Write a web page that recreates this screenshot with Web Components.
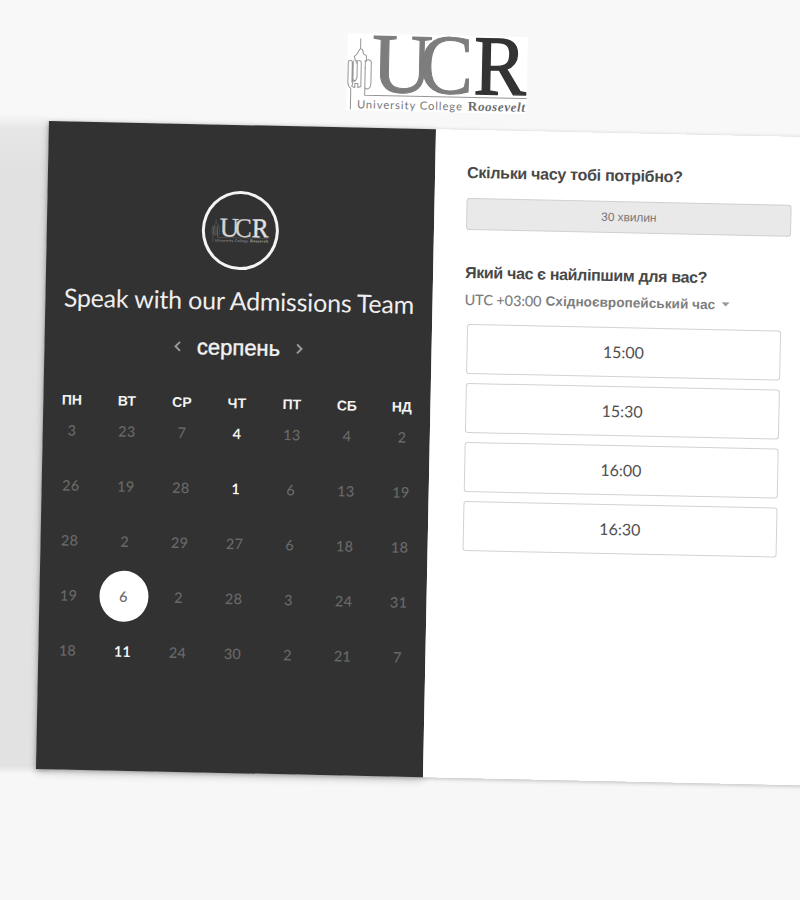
<!DOCTYPE html>
<html lang="uk"><head><meta charset="utf-8"><title>UCR</title>
<style>
html,body{margin:0;height:900px;overflow:hidden}
body{width:800px;background:linear-gradient(#f8f8f8,#f9f9f9 105px,#f8f8f8 112px,#f7f7f7);font-family:"Liberation Sans",Arial,sans-serif}
</style></head><body><booking-page></booking-page>
<script>
const define=(name,html)=>customElements.define(name,class extends HTMLElement{
  constructor(){super();this.attachShadow({mode:'open'});}
  connectedCallback(){const t=document.createElement('template');t.innerHTML=typeof html==='function'?html(this):html;this.shadowRoot.replaceChildren(t.content.cloneNode(true));}
});

define('ucr-logo',`<style>:host{display:block;width:180px;height:77px;background:var(--logo-bg,#fff)}svg{display:block;width:100%;height:100%;overflow:visible}</style>
<svg viewBox="0 0 180 77" font-family="'Liberation Serif',serif">
<g fill="none" stroke="var(--logo-line,#969696)" stroke-width="1">
<path d="M13 5v10l-1 1-2 4-3 3 1 4h1v3M13 15l2 1 1 4 3 2v5h-1v8"/>
<path d="M4 55v21M4 55q-3-2-3-6V29q0-2 2-2t2 2v20M6 27v22l-1 4 3 1V50h3v4l3-1V29q0-2-2-2t-2 2v15l-2 4-2-2M19 28q0-2 2-2t3 2v22q0 4-3 5t-3-3V34M18 35v26.500H180"/></g>
<g font-size="85" stroke-width="1">
<text x="24.500" y="58" fill="var(--logo-soft,#7d7d7d)" stroke="var(--logo-soft,#7d7d7d)" textLength="61" lengthAdjust="spacingAndGlyphs">U</text>
<text x="72" y="58" fill="var(--logo-soft,#7d7d7d)" stroke="var(--logo-soft,#7d7d7d)" textLength="54" lengthAdjust="spacingAndGlyphs">C</text>
<text x="126.500" y="58" fill="var(--logo-strong,#333)" stroke="var(--logo-strong,#333)" stroke-width="1.400" textLength="52.500" lengthAdjust="spacingAndGlyphs">R</text></g>
<text x="10.500" y="74.700" fill="var(--logo-text,#777)" font-family="Lato,sans-serif" font-size="11.200" textLength="105">University College</text>
<text x="121.500" y="74.700" fill="var(--logo-text,#6c6c6c)" font-weight="bold" font-size="13" textLength="57">R<tspan font-style="italic">oosevelt</tspan></text>
</svg>`);

define('org-avatar',`<style>:host{display:flex;align-items:center;justify-content:center;width:77px;height:79px;box-sizing:border-box;border:3px solid #f4f4f4;border-radius:50%}
ucr-logo{width:57px;height:25px;--logo-bg:transparent;--logo-line:#888;--logo-soft:#d2d2d2;--logo-strong:#e0e0e0;--logo-text:#aaa}</style><ucr-logo></ucr-logo>`);

define('month-nav',`<style>:host{display:flex;align-items:center;justify-content:center;gap:15.500px;color:#f2f2f2;font-size:22px;line-height:28px;-webkit-text-stroke:.4px;transform:translateX(.5px)}
svg{width:7px;height:11px;fill:none;stroke:#999;stroke-width:2}</style>
<svg viewBox="0 0 7 11"><path d="M6 1 1.500 5.500 6 10"/></svg><slot></slot><svg viewBox="0 0 7 11"><path d="M1 1 5.500 5.500 1 10"/></svg>`);

define('calendar-day',`<style>:host{display:flex;align-items:center;justify-content:center;height:55px;font:500 14.500px Lato,sans-serif;letter-spacing:.3px;color:#696969}
span{display:flex;align-items:center;justify-content:center;width:49px;height:51px;border-radius:50%}
:host([open]){color:#fff;font-weight:600}
:host([selected]) span{background:#fff;color:#666}</style><span><slot></slot></span>`);

const rows=['3 23 7 4* 13 4 2','26 19 28 1* 6 13 19','28 2 29 27 6 18 18','19 6! 2 28 3 24 31','18 11* 24 30 2 21 7'];
define('calendar-grid',()=>`<style>:host{display:grid;grid-template-columns:repeat(7,55px);grid-template-rows:20px;justify-content:center;grid-auto-rows:54.900px}
b{font-size:14px;line-height:20px;text-align:center;color:#f2f2f2}
calendar-day{margin:-6.200px -.6px 0 .6px}</style>`+
['ПН','ВТ','СР','ЧТ','ПТ','СБ','НД'].map(d=>`<b>${d}</b>`).join('')+
rows.join(' ').split(' ').map(d=>`<calendar-day ${d.endsWith('*')?'open':d.endsWith('!')?'selected':''}>${parseInt(d)}</calendar-day>`).join(''));

define('calendar-panel',`<style>:host{display:flex;flex-direction:column;width:387px;height:648px;box-sizing:border-box;padding-top:66px;background:#323232;box-shadow:0 3px 9px rgba(0,0,0,.2);flex:none}
org-avatar{align-self:center}
h1{margin:14.500px 0 0;font:400 25px/32px Lato,sans-serif;text-align:center;color:#eee;white-space:nowrap;letter-spacing:-.2px}
month-nav{margin-top:17.500px}calendar-grid{margin-top:31px}</style>
<org-avatar></org-avatar><h1>Speak with our Admissions Team</h1><month-nav>серпень</month-nav><calendar-grid></calendar-grid>`);

define('time-slot',`<style>:host{display:flex;align-items:center;justify-content:center;box-sizing:border-box;width:313.500px;height:50px;border:1px solid #d2d2d2;border-radius:3px;font:400 16px Lato,sans-serif;color:#505050;padding-bottom:1px}</style><slot></slot>`);

define('duration-option',`<style>:host{display:flex;align-items:center;justify-content:center;box-sizing:border-box;width:325px;height:32px;border:1px solid #d0d0d0;border-radius:3px;background:#e9e9e9;font-size:12px;letter-spacing:-.1px;color:#777}</style><slot></slot>`);

define('zone-picker',`<style>:host{display:flex;align-items:center;height:20px;color:#7d7d7d;white-space:nowrap}
.o{font:500 14.500px Lato,sans-serif;letter-spacing:-.1px;width:81px}.z{font-weight:700;font-size:13.500px;letter-spacing:.08px}i{margin-left:6px;border:4px solid transparent;border-top:4.500px solid #999;border-bottom:0}</style>
<span class="o">UTC +03:00</span><span class="z">Східноєвропейський час</span><i></i>`);

define('time-panel',`<style>:host{display:block;flex:1;height:648px;box-sizing:border-box;padding:33px 0 0 32px;background:#fff}
h2{margin:0;font-size:16px;line-height:20px;letter-spacing:-.28px;color:#484848;white-space:nowrap}
duration-option{margin:15.500px 0 32.500px}zone-picker{margin-top:6.500px}
.slots{display:flex;flex-direction:column;gap:9px;margin:15px 0 0 3px}</style>
<h2>Скільки часу тобі потрібно?</h2><duration-option>30 хвилин</duration-option>
<h2 style="letter-spacing:-.34px">Який час є найліпшим для вас?</h2><zone-picker></zone-picker>
<div class="slots"><time-slot>15:00</time-slot><time-slot>15:30</time-slot><time-slot>16:00</time-slot><time-slot>16:30</time-slot></div>`);

define('booking-page',`<style>:host{display:block;width:800px;height:900px;overflow:hidden;background:linear-gradient(transparent 114px,#e7e7e7 128px,#e1e1e1 170px,#e2e2e2 766px,transparent 774px) 0 0/49px 900px no-repeat}
.scene{width:800px;box-sizing:border-box;margin-left:49px;padding-top:27px;transform-origin:0 120.500px;transform:matrix(1,.0212,-.0201,1,0,0)}
ucr-logo{margin-left:297px}
.card{display:flex;width:790px;height:648px;margin-top:16.500px;box-shadow:0 1px 4px rgba(0,0,0,.25)}</style>
<div class="scene"><ucr-logo></ucr-logo><div class="card"><calendar-panel></calendar-panel><time-panel></time-panel></div></div>`);
</script></body></html>
